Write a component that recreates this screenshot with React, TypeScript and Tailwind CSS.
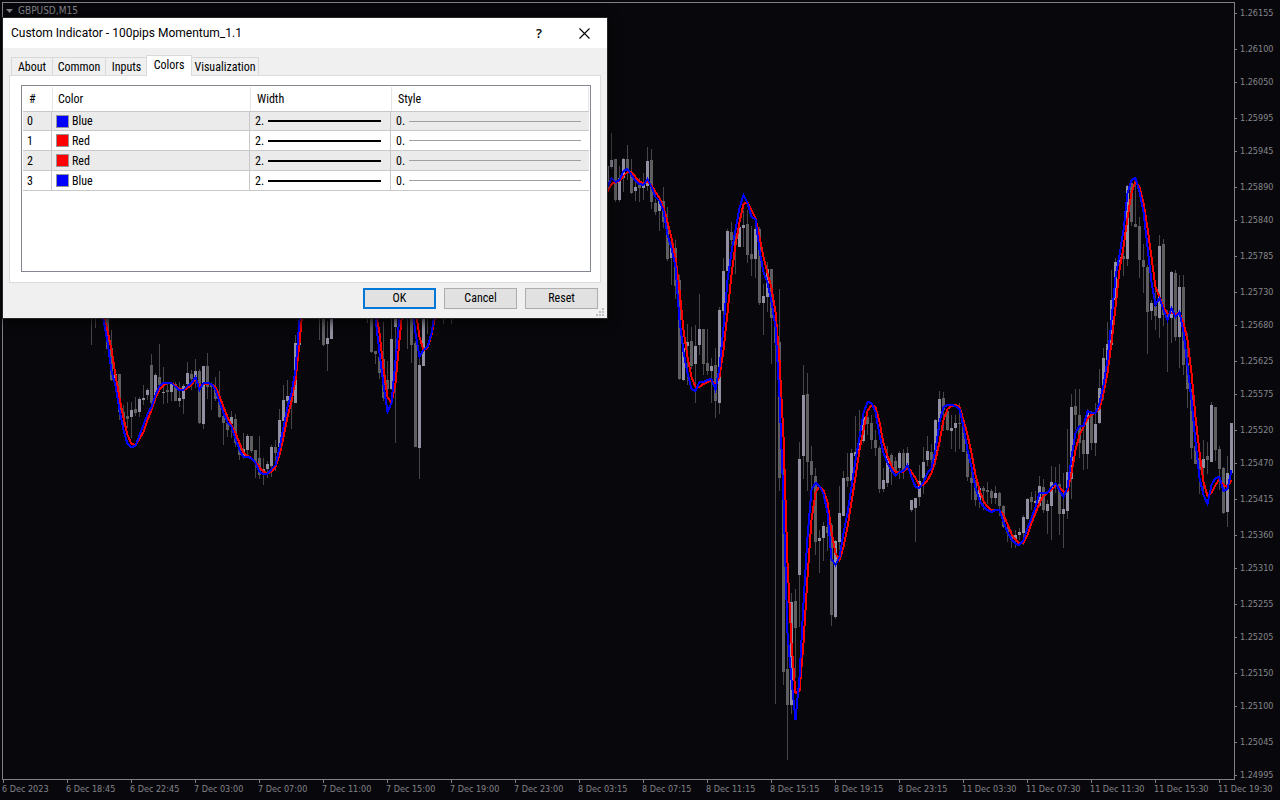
import React, { memo, useState } from 'react';

const BAR_STEP = 4;

// x, high, low, body top, body bottom, 1 = bullish
const CANDLES: number[][] = [
  [91, 300, 345, 300, 310, 0], [95, 300, 328, 300, 310, 0], [99, 300, 318, 300, 316, 0], [103, 305, 325, 305, 320, 0],
  [107, 310, 349, 310, 349, 0], [111, 330, 381, 348, 380, 0], [115, 372, 380, 374, 379, 1], [119, 374, 420, 374, 412, 0],
  [123, 405, 425, 412, 418, 0], [127, 402, 428, 416, 419, 0], [131, 402, 438, 410, 417, 1], [135, 397, 416, 409, 413, 0],
  [139, 397, 417, 399, 412, 1], [143, 385, 405, 398, 400, 1], [147, 388, 400, 390, 395, 1], [151, 354, 404, 365, 403, 0],
  [155, 373, 402, 375, 397, 1], [159, 344, 386, 377, 385, 0], [163, 367, 404, 392, 393, 1], [167, 382, 403, 390, 392, 0],
  [171, 382, 401, 384, 392, 1], [175, 382, 401, 384, 401, 0], [179, 382, 407, 398, 401, 1], [183, 384, 414, 386, 399, 1],
  [187, 362, 386, 373, 384, 1], [191, 370, 390, 374, 379, 0], [195, 359, 388, 371, 377, 1], [199, 369, 424, 371, 423, 0],
  [203, 366, 429, 366, 424, 1], [207, 353, 399, 366, 387, 0], [211, 382, 410, 384, 387, 0], [215, 377, 401, 387, 399, 0],
  [219, 371, 418, 398, 417, 0], [223, 416, 445, 416, 423, 0], [227, 418, 437, 423, 430, 0], [231, 411, 438, 417, 424, 1],
  [235, 414, 447, 419, 443, 0], [239, 443, 460, 443, 455, 0], [243, 433, 459, 449, 457, 1], [247, 434, 457, 436, 450, 1],
  [251, 436, 453, 436, 451, 0], [255, 450, 478, 450, 462, 0], [259, 436, 479, 458, 475, 0], [263, 458, 485, 469, 472, 1],
  [267, 461, 478, 464, 469, 1], [271, 445, 477, 447, 466, 1], [275, 440, 471, 447, 453, 0], [279, 409, 450, 420, 447, 1],
  [283, 385, 421, 400, 421, 1], [287, 380, 404, 396, 401, 1], [291, 396, 429, 398, 402, 0], [295, 335, 403, 343, 403, 1],
  [299, 318, 345, 326, 345, 1], [319, 300, 340, 300, 319, 0], [323, 300, 346, 300, 345, 0], [327, 321, 371, 338, 344, 1],
  [331, 300, 339, 300, 339, 1], [367, 300, 323, 300, 310, 0], [371, 300, 353, 300, 352, 0], [375, 351, 364, 351, 354, 0],
  [379, 357, 379, 357, 373, 0], [383, 322, 401, 359, 398, 0], [387, 361, 392, 380, 389, 0], [391, 310, 390, 339, 389, 1],
  [395, 300, 443, 300, 327, 1], [407, 300, 349, 300, 310, 0], [411, 300, 363, 300, 345, 0], [415, 341, 447, 343, 447, 0],
  [419, 354, 479, 365, 448, 1], [423, 300, 366, 300, 366, 1], [427, 300, 334, 300, 310, 0], [443, 300, 324, 300, 310, 0],
  [451, 300, 324, 300, 310, 0],
  [607, 151, 204, 166, 190, 1], [611, 133, 169, 160, 167, 1], [615, 159, 202, 159, 200, 0], [619, 166, 202, 178, 200, 1],
  [623, 158, 192, 159, 178, 1], [627, 145, 180, 159, 171, 0], [631, 159, 194, 173, 193, 0], [635, 177, 201, 187, 191, 1],
  [639, 178, 202, 184, 188, 0], [643, 173, 200, 185, 188, 1], [647, 147, 191, 161, 186, 1], [651, 149, 209, 160, 202, 0],
  [655, 199, 215, 203, 212, 0], [659, 200, 231, 201, 211, 1], [663, 187, 228, 201, 222, 0], [667, 207, 261, 222, 259, 0],
  [671, 240, 285, 245, 258, 1], [675, 240, 299, 248, 286, 0], [679, 275, 380, 280, 379, 0], [683, 343, 381, 348, 380, 1],
  [687, 324, 385, 342, 346, 1], [691, 327, 369, 341, 366, 0], [695, 325, 403, 346, 364, 1], [699, 294, 355, 329, 345, 1],
  [703, 329, 375, 329, 364, 0], [707, 329, 375, 363, 371, 0], [711, 358, 403, 366, 371, 1], [715, 348, 418, 365, 401, 0],
  [719, 307, 414, 310, 403, 1], [723, 258, 315, 271, 311, 1], [727, 229, 271, 231, 271, 1], [731, 222, 245, 232, 240, 0],
  [735, 226, 274, 237, 245, 0], [739, 225, 247, 227, 247, 1], [743, 210, 247, 225, 228, 1], [747, 210, 263, 224, 255, 0],
  [751, 226, 276, 254, 259, 0], [755, 227, 278, 229, 259, 1], [759, 227, 305, 229, 303, 0], [763, 284, 335, 296, 303, 1],
  [767, 262, 312, 269, 297, 1], [771, 269, 364, 269, 318, 0], [775, 313, 704, 315, 343, 0], [779, 289, 491, 342, 478, 0],
  [783, 459, 685, 459, 672, 0], [787, 630, 760, 669, 705, 0], [791, 593, 714, 602, 705, 1], [795, 589, 678, 601, 628, 0],
  [799, 442, 627, 459, 575, 1], [803, 365, 479, 395, 456, 1], [807, 373, 491, 394, 462, 0], [811, 446, 500, 461, 475, 0],
  [815, 468, 555, 476, 542, 0], [819, 530, 573, 538, 541, 1], [823, 522, 561, 526, 538, 1], [827, 525, 551, 527, 533, 0],
  [831, 523, 626, 525, 615, 0], [835, 540, 619, 541, 617, 1], [839, 486, 550, 513, 542, 1], [843, 471, 516, 478, 516, 1],
  [847, 453, 487, 477, 481, 0], [851, 449, 487, 453, 481, 1], [855, 416, 460, 452, 456, 1], [859, 410, 455, 443, 450, 1],
  [863, 415, 443, 417, 441, 1], [867, 415, 435, 417, 424, 0], [871, 415, 449, 423, 440, 0], [875, 430, 456, 440, 448, 0],
  [879, 446, 493, 448, 489, 0], [883, 468, 492, 480, 489, 1], [887, 446, 487, 456, 483, 1], [891, 453, 485, 455, 472, 0],
  [895, 457, 475, 461, 471, 0], [899, 451, 479, 453, 468, 1], [903, 449, 479, 453, 470, 0], [907, 447, 470, 453, 465, 1],
  [911, 500, 512, 500, 510, 1], [915, 498, 542, 498, 508, 1], [919, 465, 506, 481, 497, 1], [923, 447, 494, 462, 478, 1],
  [927, 436, 466, 451, 460, 1], [931, 444, 467, 452, 460, 0], [935, 419, 465, 420, 460, 1], [939, 391, 430, 399, 422, 1],
  [943, 392, 431, 398, 410, 0], [947, 410, 431, 411, 430, 0], [951, 415, 449, 428, 431, 1], [955, 415, 452, 423, 428, 1],
  [959, 403, 449, 423, 424, 0], [963, 420, 452, 425, 452, 0], [967, 449, 481, 451, 477, 0], [971, 470, 500, 478, 483, 0],
  [975, 480, 506, 483, 500, 0], [979, 486, 508, 488, 500, 1], [983, 486, 510, 488, 491, 0], [987, 482, 504, 490, 492, 0],
  [991, 489, 504, 491, 498, 0], [995, 486, 504, 493, 498, 1], [999, 492, 516, 493, 506, 0], [1003, 505, 528, 506, 527, 0],
  [1007, 525, 542, 527, 533, 0], [1011, 530, 548, 535, 540, 0], [1015, 530, 548, 535, 540, 1], [1019, 528, 540, 532, 535, 1],
  [1023, 515, 545, 517, 533, 1], [1027, 498, 520, 499, 519, 1], [1031, 492, 510, 497, 502, 0], [1035, 491, 510, 501, 503, 1],
  [1039, 476, 507, 486, 506, 1], [1043, 479, 513, 487, 510, 0], [1047, 500, 534, 504, 511, 1], [1051, 466, 540, 482, 506, 1],
  [1055, 467, 493, 483, 487, 0], [1059, 464, 535, 484, 514, 0], [1063, 473, 548, 509, 514, 1], [1067, 429, 519, 472, 511, 1],
  [1071, 394, 499, 407, 479, 1], [1075, 389, 430, 406, 415, 0], [1079, 389, 458, 415, 443, 0], [1083, 426, 470, 440, 454, 0],
  [1087, 409, 469, 411, 454, 1], [1091, 411, 450, 413, 443, 0], [1095, 403, 456, 424, 443, 1], [1099, 369, 424, 388, 423, 1],
  [1103, 348, 400, 358, 388, 1], [1107, 322, 368, 344, 365, 1], [1111, 270, 345, 300, 345, 1], [1115, 258, 302, 262, 300, 1],
  [1119, 250, 264, 257, 262, 1], [1123, 243, 276, 256, 259, 0], [1127, 185, 266, 186, 259, 1], [1131, 182, 226, 183, 222, 0],
  [1135, 182, 227, 224, 227, 0], [1139, 217, 278, 226, 260, 0], [1143, 244, 293, 260, 267, 0], [1147, 265, 354, 267, 312, 0],
  [1151, 300, 320, 303, 311, 1], [1155, 290, 330, 306, 316, 0], [1159, 235, 338, 246, 318, 1], [1163, 239, 326, 244, 315, 0],
  [1167, 310, 372, 315, 318, 0], [1171, 271, 343, 272, 318, 1], [1175, 270, 341, 273, 337, 0], [1179, 275, 368, 287, 337, 1],
  [1183, 275, 375, 287, 365, 0], [1187, 333, 408, 363, 389, 0], [1191, 389, 459, 389, 448, 0], [1195, 444, 464, 446, 464, 0],
  [1199, 450, 494, 458, 470, 0], [1203, 440, 494, 459, 468, 1], [1207, 442, 474, 456, 460, 0], [1211, 402, 462, 405, 462, 1],
  [1215, 407, 461, 407, 450, 0], [1219, 446, 490, 449, 469, 0], [1223, 467, 514, 468, 513, 0], [1227, 456, 527, 473, 512, 1],
  [1231, 423, 473, 423, 473, 1],
];

type Segment = { start: number; values: number[] };

const SLOW: Segment[] = [
  {
    start: 99,
    values: [
      300, 316, 330, 350, 375, 398, 418, 435, 444, 445, 439, 432, 420, 410, 398, 390, 385, 383, 383, 386, 389, 390, 388,
      385, 379, 386, 384, 384, 384, 387, 396, 407, 417, 425, 433, 443, 453, 456, 458, 462, 467, 472, 473, 472, 467, 455,
      437, 417, 401, 380, 343, 300,
    ],
  },
  { start: 375, values: [311, 333, 368, 397, 403, 383, 340, 300] },
  { start: 415, values: [309, 337, 350, 348, 335, 315] },
  {
    start: 607,
    values: [
      192, 184, 182, 181, 176, 172, 172, 177, 182, 183, 182, 185, 192, 198, 207, 222, 238, 258, 290, 330, 357, 377, 387,
      387, 384, 382, 380, 385, 377, 350, 313, 275, 245, 222, 204, 202, 210, 218, 237, 257, 273, 288, 312, 360, 437, 563,
      643, 693, 691, 643, 577, 520, 493, 486, 490, 502, 532, 553, 560, 547, 527, 502, 477, 450, 430, 411, 405, 407, 422,
      443, 456, 466, 472, 472, 472, 467, 472, 478, 486, 485, 480, 473, 460, 442, 420, 409, 406, 405, 407, 420, 435, 453,
      475, 490, 501, 507, 510, 510, 510, 515, 524, 534, 540, 543, 543, 535, 523, 513, 503, 496, 493, 490, 486, 487, 492,
      491, 473, 450, 435, 427, 419, 414, 413, 409, 393, 373, 343, 307, 270, 247, 218, 193, 181, 187, 203, 228, 257, 287,
      297, 307, 314, 313, 314, 313, 323, 340, 373, 417, 452, 482, 496, 493, 485, 479, 485, 487, 480,
    ],
  },
];

const FAST: Segment[] = [
  {
    start: 99,
    values: [
      300, 320, 342, 371, 386, 410, 430, 444, 447, 446, 435, 425, 414, 407, 395, 386, 383, 383, 383, 387, 390, 390, 386,
      383, 377, 390, 383, 383, 384, 390, 402, 413, 422, 427, 439, 450, 457, 457, 458, 463, 472, 474, 474, 469, 465, 448,
      427, 407, 393, 370, 320, 300,
    ],
  },
  { start: 375, values: [318, 353, 385, 412, 403, 360, 316] },
  { start: 411, values: [300, 333, 357, 350, 347, 333, 308] },
  {
    start: 607,
    values: [
      187, 178, 182, 180, 171, 169, 175, 181, 184, 185, 179, 187, 197, 201, 211, 235, 248, 267, 320, 352, 373, 389, 391,
      382, 382, 380, 379, 390, 367, 327, 280, 252, 230, 208, 195, 203, 217, 219, 250, 272, 283, 302, 327, 397, 500, 633,
      680, 720, 677, 603, 537, 490, 483, 486, 494, 513, 559, 565, 557, 533, 513, 487, 460, 437, 413, 402, 403, 412, 435,
      453, 463, 470, 476, 472, 471, 465, 477, 487, 488, 482, 473, 468, 450, 422, 407, 405, 405, 406, 409, 427, 450, 467,
      488, 500, 507, 510, 512, 510, 510, 522, 532, 539, 544, 545, 540, 528, 518, 507, 493, 493, 493, 487, 483, 490, 497,
      488, 457, 433, 426, 426, 411, 413, 413, 403, 385, 360, 320, 277, 255, 230, 193, 180, 178, 192, 212, 247, 282, 305,
      298, 310, 320, 308, 317, 312, 332, 366, 400, 442, 478, 495, 504, 485, 478, 477, 491, 489, 470,
    ],
  },
];

const PRICES = [
  '1.26155', '1.26100', '1.26050', '1.25995', '1.25945', '1.25890', '1.25840', '1.25785', '1.25730', '1.25680',
  '1.25625', '1.25575', '1.25520', '1.25470', '1.25415', '1.25360', '1.25310', '1.25255', '1.25205', '1.25150',
  '1.25100', '1.25045', '1.24995',
];

const TIMES = [
  '6 Dec 2023', '6 Dec 18:45', '6 Dec 22:45', '7 Dec 03:00', '7 Dec 07:00', '7 Dec 11:00', '7 Dec 15:00',
  '7 Dec 19:00', '7 Dec 23:00', '8 Dec 03:15', '8 Dec 07:15', '8 Dec 11:15', '8 Dec 15:15', '8 Dec 19:15',
  '8 Dec 23:15', '11 Dec 03:30', '11 Dec 07:30', '11 Dec 11:30', '11 Dec 15:30', '11 Dec 19:30',
];

const TABS = [
  { label: 'About', width: 'w-[41px]' },
  { label: 'Common', width: 'w-[53px]' },
  { label: 'Inputs', width: 'w-[42px]' },
  { label: 'Colors', width: 'w-[46px]' },
  { label: 'Visualization', width: 'w-[67px]' },
];

const ROWS = [
  { id: 0, name: 'Blue', swatch: 'bg-[#0000ff]' },
  { id: 1, name: 'Red', swatch: 'bg-[#ff0000]' },
  { id: 2, name: 'Red', swatch: 'bg-[#ff0000]' },
  { id: 3, name: 'Blue', swatch: 'bg-[#0000ff]' },
];

function toPoints({ start, values }: Segment) {
  return values.map((y, i) => `${start + i * BAR_STEP + 0.5},${y}`).join(' ');
}

const PriceChart = memo(function PriceChart() {
  return (
    <svg
      className="block h-full w-full"
      viewBox="3 3 1231 776"
      preserveAspectRatio="none"
      shapeRendering="crispEdges"
      role="img"
      aria-label="GBPUSD M15 candles"
    >
      {CANDLES.map(([x, high, low, top, bottom, up]) => (
        <g key={x}>
          <rect x={x} y={high} width={1} height={low - high} fill="#47474b" />
          <rect x={x - 1} y={top} width={3} height={bottom - top} fill={up ? '#9090a0' : '#5f5f62'} />
        </g>
      ))}
      {SLOW.map((s) => (
        <polyline key={s.start} points={toPoints(s)} fill="none" stroke="#ff0000" strokeWidth={2} />
      ))}
      {FAST.map((s) => (
        <polyline key={s.start} points={toPoints(s)} fill="none" stroke="#0000ff" strokeWidth={2} />
      ))}
    </svg>
  );
});

function PriceAxis() {
  return (
    <ul className="flex h-full flex-col pt-[7px] pb-[11px]">
      {PRICES.map((p, i) => {
        const next = PRICES[i + 1];
        return (
          <li
            key={p}
            className="flex h-0 items-start gap-[3px] whitespace-nowrap leading-3"
            style={{ flexGrow: next ? Math.round((Number(p) - Number(next)) * 100000) : 0 }}
          >
            <span className="mt-[6px] h-px w-[2px] bg-[#808088]" />
            {p}
          </li>
        );
      })}
    </ul>
  );
}

function TimeAxis() {
  return (
    <ul className="ml-[3px] flex w-screen">
      {TIMES.map((t) => (
        <li key={t} className="w-1/20 shrink-0 whitespace-nowrap leading-3">
          <span className="block h-[3px] w-px bg-[#808088]" />
          <span className="-ml-px block">{t}</span>
        </li>
      ))}
    </ul>
  );
}

function ColorsTable() {
  const th = 'border-b border-[#c8c8c8] p-0 text-left font-normal';
  const td = 'border-b border-[#c8c8c8] p-0';
  return (
    <table className="w-full table-fixed border-separate border-spacing-0">
      <colgroup>
        <col className="w-[29px]" />
        <col className="w-[198px]" />
        <col className="w-[141px]" />
        <col />
      </colgroup>
      <thead>
        <tr className="h-[25px]">
          <th className={th}>
            <div className="flex h-6 items-center pl-[6px]">#</div>
          </th>
          <th className={th}>
            <div className="flex h-6 items-center border-l border-[#e5e5e5] pl-[5px]">Color</div>
          </th>
          <th className={th}>
            <div className="flex h-6 items-center border-l border-[#e5e5e5] pl-[6px]">Width</div>
          </th>
          <th className={th}>
            <div className="flex h-6 items-center border-x border-[#e5e5e5] pl-[6px]">Style</div>
          </th>
        </tr>
      </thead>
      <tbody>
        {ROWS.map((r) => (
          <tr key={r.id} className="h-5 first:h-[19px] odd:bg-[#ebebeb]">
            <td className={`${td} border-r pl-1`}>{r.id}</td>
            <td className={`${td} border-r`}>
              <div className="flex items-center gap-[3px] pl-1">
                <span className={`h-[13px] w-[13px] border border-[#969696] ${r.swatch}`} />
                {r.name}
              </div>
            </td>
            <td className={`${td} border-r`}>
              <div className="flex items-center pr-[9px] pl-[5px]">
                <span className="w-[13px]">2.</span>
                <span className="h-[2px] grow bg-black" />
              </div>
            </td>
            <td className={td}>
              <div className="flex items-center pr-2 pl-[5px]">
                <span className="w-[13px]">0.</span>
                <span className="h-px grow bg-[#a0a0a0]" />
              </div>
            </td>
          </tr>
        ))}
      </tbody>
    </table>
  );
}

function ResizeGrip() {
  return (
    <svg className="absolute right-[3px] bottom-[2px] h-2 w-2" viewBox="0 0 8 8" shapeRendering="crispEdges" fill="#bfbfbf">
      <path d="M6 0h2v2H6zM3 3h2v2H3zM6 3h2v2H6zM0 6h2v2H0zM3 6h2v2H3zM6 6h2v2H6z" />
    </svg>
  );
}

function IndicatorDialog() {
  const [active, setActive] = useState('Colors');
  return (
    <div
      role="dialog"
      aria-labelledby="dialog-title"
      className="absolute top-[18px] left-[3px] w-[604px] bg-[#f0f0f0] font-['Roboto_Condensed','Liberation_Sans',sans-serif] text-[12px] leading-4 text-black shadow-[0_2px_12px_#000000] outline outline-[#26262a]"
    >
      <header className="flex h-[30px] items-center bg-white pl-2">
        <h1 id="dialog-title" className="grow font-['Roboto','Noto_Sans',sans-serif] text-[12px]">
          Custom Indicator - 100pips Momentum_1.1
        </h1>
        <button type="button" aria-label="Help" className="w-11 font-['Open_Sans',sans-serif] text-[13px] font-semibold">
          ?
        </button>
        <button type="button" aria-label="Close" className="flex w-[46px] justify-center">
          <svg className="h-[11px] w-[11px]" viewBox="0 0 11 11" stroke="#000" strokeWidth="1.1">
            <path d="M.5 .5l10 10M10.5 .5l-10 10" />
          </svg>
        </button>
      </header>

      <div className="px-[6px] pt-[7px]">
        <div role="tablist" className="flex h-5 items-end pl-[2px]">
          {TABS.map(({ label, width }) => (
            <button
              key={label}
              type="button"
              role="tab"
              aria-selected={label === active}
              onClick={() => setActive(label)}
              className={
                label === active
                  ? `relative z-10 -mb-px -ml-px h-[21px] border border-b-0 border-[#d9d9d9] bg-white pb-[2px] ${width}`
                  : `h-[18px] border border-r-0 border-b-0 border-[#d9d9d9] last:border-r last:border-l-0 ${width}`
              }
            >
              {label}
            </button>
          ))}
        </div>
        <div role="tabpanel" className="border border-[#dcdcdc] bg-white pt-[9px] pr-[9px] pb-[10px] pl-[11px]">
          <div className="h-[187px] w-full border border-[#828790] p-px">
            <ColorsTable />
          </div>
        </div>
      </div>

      <footer className="flex justify-end gap-2 px-[9px] pt-[5px] pb-[9px]">
        <button type="button" className="h-[21px] w-[73px] border-2 border-[#0078d7] bg-[#e1e1e1] leading-[17px]">
          OK
        </button>
        <button type="button" className="h-[21px] w-[73px] border border-[#adadad] bg-[#e1e1e1] leading-[19px]">
          Cancel
        </button>
        <button type="button" className="h-[21px] w-[73px] border border-[#adadad] bg-[#e1e1e1] leading-[19px]">
          Reset
        </button>
      </footer>
      <ResizeGrip />
    </div>
  );
}

export default function App() {
  return (
    <main className="relative grid h-screen grid-cols-[minmax(0,1fr)_45px] grid-rows-[minmax(0,1fr)_20px] overflow-hidden bg-[#08080c] font-['DejaVu_Sans_Condensed','DejaVu_Sans',sans-serif] text-[9px] text-[#85858a]">
      <section className="mt-[2px] ml-[2px] min-h-0 border border-[#808088]">
        <PriceChart />
      </section>
      <PriceAxis />
      <div className="col-span-2 min-w-0">
        <TimeAxis />
      </div>

      <div className="absolute top-[5px] left-[6px] flex items-center gap-[5px] text-[10px] leading-3">
        <svg className="h-1 w-[7px]" viewBox="0 0 7 4" fill="#85858a">
          <path d="M0 0h7L3.5 4z" />
        </svg>
        GBPUSD,M15
      </div>
      <IndicatorDialog />
    </main>
  );
}
